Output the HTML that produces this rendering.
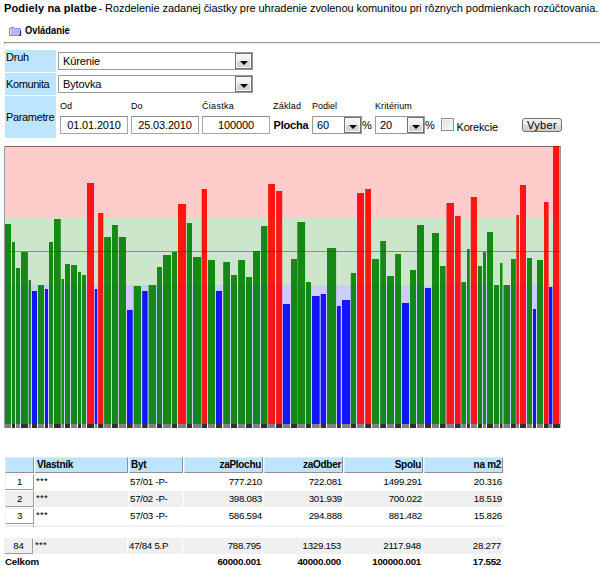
<!DOCTYPE html>
<html><head><meta charset="utf-8"><title>Podiely na platbe</title>
<style>
html,body{margin:0;padding:0;background:#fff;}
body{width:600px;height:582px;position:relative;overflow:hidden;font-family:"Liberation Sans",sans-serif;font-size:11px;color:#000;}
.a{position:absolute;white-space:nowrap;line-height:1;}
.chart{position:absolute;left:4px;top:146px;}
.lab{position:absolute;left:5px;width:51px;background:#bde5ff;}
.sel{position:absolute;box-sizing:border-box;border:1px solid #9a9a9a;background:#fff;height:18px;}
.sel .btn{position:absolute;right:0;top:0;bottom:0;width:17px;box-sizing:border-box;border:1px solid #707070;background:linear-gradient(#f6f6f6 0%,#eeeeee 50%,#d8d8d8 51%,#d0d0d0 100%);box-shadow:inset 0 0 0 1px #fafafa;}
.sel .btn:after{content:"";position:absolute;left:3.5px;top:7px;border-left:4px solid transparent;border-right:4px solid transparent;border-top:4px solid #000;}
.sel span{position:absolute;left:4px;top:2px;line-height:12px;letter-spacing:-0.12px;}
.inp{position:absolute;box-sizing:border-box;border:1px solid #a6a6a6;border-top-color:#8a8a8a;background:#fff;height:18px;width:68px;text-align:center;line-height:16px;letter-spacing:-0.15px;}
.sm{font-size:9px;}
.th,.td,.tn,.tf{position:absolute;box-sizing:border-box;height:16px;line-height:15px;font-size:9.7px;letter-spacing:-0.25px;white-space:nowrap;overflow:hidden;}
.th{background:#bde5ff;border-right:1px solid #909090;border-bottom:1px solid #909090;border-top:1px solid #d8efff;border-left:1px solid #d8efff;font-weight:bold;font-size:10px;letter-spacing:-0.3px;padding:0 1px;line-height:13px;}
.td{padding:0 1px;}
.tn{border-right:1px solid #9a9a9a;border-bottom:1px solid #9a9a9a;border-left:1px solid #f0f0f0;border-top:1px solid #f0f0f0;text-align:center;line-height:13px;}
.tf{font-weight:bold;padding:0 1px;}
.st{letter-spacing:0.25px;position:relative;top:-1px;}
</style></head><body>
<div class="a" style="left:4px;top:2px;font-size:11px;line-height:13px;"><b style="letter-spacing:0.15px">Podiely na platbe</b><span style="letter-spacing:-0.06px;margin-left:-1.5px"> - Rozdelenie zadanej čiastky pre uhradenie zvolenou komunitou pri rôznych podmienkach rozúčtovania.</span></div>
<svg class="a" style="left:9px;top:26px" width="14" height="11" viewBox="0 0 14 11"><path d="M0.5 9.5 L0.5 2.5 L1.5 1.5 L5 1.5 L6 2.5 L11 2.5 L11.5 3.5 L11.5 9.5 Z" fill="#b6b6fa" stroke="#8c8ce8" stroke-width="1"/><path d="M1.5 3.5 L1.5 8.5" stroke="#e4e4ff" stroke-width="1"/><path d="M11.6 4.5 L11.6 9.3 L10 9.3" stroke="#26266a" stroke-width="1.1" fill="none"/></svg>
<div class="a" style="left:25px;top:25px;font-size:10px;font-weight:bold;line-height:11px;transform:scaleX(0.935);transform-origin:0 0;">Ovládanie</div>
<div class="a" style="left:4px;top:42px;width:596px;height:1px;background:#979797;"></div>
<div class="a" style="left:4px;top:43px;width:596px;height:1px;background:#eeeeee;border-left:1px solid #a0a0a0;box-sizing:border-box;"></div>

<div class="lab" style="top:50px;height:22px;"></div>
<div class="lab" style="top:73px;height:22px;"></div>
<div class="lab" style="top:96px;height:42px;"></div>
<div class="a" style="left:6px;top:51px;line-height:13px;letter-spacing:-0.2px;">Druh</div>
<div class="a" style="left:6px;top:78px;line-height:13px;letter-spacing:-0.4px;">Komunita</div>
<div class="a" style="left:6px;top:111px;line-height:13px;letter-spacing:-0.35px;">Parametre</div>

<div class="sel" style="left:58px;top:52px;width:195px;"><span>Kúrenie</span><div class="btn"></div></div>
<div class="sel" style="left:58px;top:75px;width:195px;"><span>Bytovka</span><div class="btn"></div></div>

<div class="a sm" style="left:60px;top:101px;line-height:11px;">Od</div>
<div class="a sm" style="left:131px;top:101px;line-height:11px;">Do</div>
<div class="a sm" style="left:202px;top:101px;line-height:11px;letter-spacing:0.3px;">Čiastka</div>
<div class="a sm" style="left:273px;top:101px;line-height:11px;letter-spacing:0.2px;">Základ</div>
<div class="a sm" style="left:312px;top:101px;line-height:11px;">Podiel</div>
<div class="a sm" style="left:375px;top:101px;line-height:11px;letter-spacing:0.1px;">Kritérium</div>

<div class="inp" style="left:60px;top:116px;">01.01.2010</div>
<div class="inp" style="left:131px;top:116px;">25.03.2010</div>
<div class="inp" style="left:202px;top:116px;">100000</div>
<div class="a" style="left:273.5px;top:119px;line-height:13px;font-weight:bold;letter-spacing:-0.2px;">Plocha</div>
<div class="sel" style="left:312px;top:116px;width:50px;"><span>60</span><div class="btn"></div></div>
<div class="a" style="left:362px;top:119px;line-height:13px;">%</div>
<div class="sel" style="left:375px;top:116px;width:50px;"><span>20</span><div class="btn"></div></div>
<div class="a" style="left:425px;top:119px;line-height:13px;">%</div>
<div class="a" style="left:441px;top:118px;width:13px;height:13px;box-sizing:border-box;border:1px solid #8e8f8f;background:linear-gradient(135deg,#dde2e6,#f6f6f6);box-shadow:inset 0 0 0 1px #f4f4f4;"></div>
<div class="a" style="left:456.5px;top:121px;line-height:13px;letter-spacing:-0.18px;">Korekcie</div>
<div class="a" style="left:522px;top:118px;width:40px;height:14px;box-sizing:border-box;border:1px solid #707070;border-radius:3px;background:linear-gradient(#f4f4f4 0%,#ebebeb 50%,#dcdcdc 51%,#cfcfcf 100%);text-align:center;line-height:12px;letter-spacing:0.3px;">Vyber</div>

<svg class="chart" width="557" height="282" viewBox="4 146 557 282">
<g shape-rendering="crispEdges">
<rect x="4" y="146" width="557" height="71" fill="#ffcccc"/>
<rect x="4" y="217" width="557" height="68" fill="#cce6cc"/>
<rect x="4" y="285" width="557" height="139" fill="#ccccff"/>
<rect x="4" y="146" width="557" height="1" fill="#806666"/>
</g>
<rect x="5" y="224" width="6" height="200" fill="#008000" fill-opacity=".9"/>
<rect x="4.3" y="424" width="6.7" height="4" fill="#808080"/>
<rect x="12" y="242" width="3" height="182" fill="#008000" fill-opacity=".9"/>
<rect x="12" y="424" width="3" height="4" fill="#303030"/>
<rect x="16" y="268" width="4" height="156" fill="#008000" fill-opacity=".9"/>
<rect x="16" y="424" width="4" height="4" fill="#808080"/>
<rect x="21" y="252" width="6.9" height="172" fill="#008000" fill-opacity=".9"/>
<rect x="21" y="424" width="6.9" height="4" fill="#303030"/>
<rect x="28.6" y="280" width="2.4" height="144" fill="#008000" fill-opacity=".9"/>
<rect x="28.6" y="424" width="2.4" height="4" fill="#808080"/>
<rect x="32" y="291" width="5" height="133" fill="#0000ff" fill-opacity=".9"/>
<rect x="32" y="424" width="5" height="4" fill="#303030"/>
<rect x="38" y="285" width="6" height="139" fill="#008000" fill-opacity=".9"/>
<rect x="38" y="424" width="6" height="4" fill="#808080"/>
<rect x="45" y="289" width="3" height="135" fill="#0000ff" fill-opacity=".9"/>
<rect x="45" y="424" width="3" height="4" fill="#303030"/>
<rect x="49" y="242" width="4" height="182" fill="#008000" fill-opacity=".9"/>
<rect x="49" y="424" width="4" height="4" fill="#808080"/>
<rect x="54" y="219" width="6.8" height="205" fill="#008000" fill-opacity=".9"/>
<rect x="54" y="424" width="6.8" height="4" fill="#303030"/>
<rect x="61.5" y="279" width="2.5" height="145" fill="#008000" fill-opacity=".9"/>
<rect x="61.5" y="424" width="2.5" height="4" fill="#808080"/>
<rect x="65" y="264" width="5" height="160" fill="#008000" fill-opacity=".9"/>
<rect x="65" y="424" width="5" height="4" fill="#303030"/>
<rect x="71" y="265" width="6" height="159" fill="#008000" fill-opacity=".9"/>
<rect x="71" y="424" width="6" height="4" fill="#808080"/>
<rect x="78" y="272" width="3" height="152" fill="#008000" fill-opacity=".9"/>
<rect x="78" y="424" width="3" height="4" fill="#303030"/>
<rect x="82" y="275" width="4" height="149" fill="#008000" fill-opacity=".9"/>
<rect x="82" y="424" width="4" height="4" fill="#808080"/>
<rect x="87" y="183" width="7" height="241" fill="#ff0000" fill-opacity=".9"/>
<rect x="87" y="424" width="7" height="4" fill="#303030"/>
<rect x="94.8" y="289" width="2.4" height="135" fill="#0000ff" fill-opacity=".9"/>
<rect x="94.8" y="424" width="2.4" height="4" fill="#808080"/>
<rect x="98.1" y="213" width="5.2" height="211" fill="#ff0000" fill-opacity=".9"/>
<rect x="98.1" y="424" width="5.2" height="4" fill="#303030"/>
<rect x="104.1" y="237" width="6.9" height="187" fill="#008000" fill-opacity=".9"/>
<rect x="104.1" y="424" width="6.9" height="4" fill="#808080"/>
<rect x="112" y="225" width="5.9" height="199" fill="#008000" fill-opacity=".9"/>
<rect x="112" y="424" width="5.9" height="4" fill="#303030"/>
<rect x="118.8" y="237" width="7.2" height="187" fill="#008000" fill-opacity=".9"/>
<rect x="118.8" y="424" width="7.2" height="4" fill="#808080"/>
<rect x="127" y="310" width="5.7" height="114" fill="#0000ff" fill-opacity=".9"/>
<rect x="127" y="424" width="5.7" height="4" fill="#303030"/>
<rect x="133.7" y="286" width="7.3" height="138" fill="#008000" fill-opacity=".9"/>
<rect x="133.7" y="424" width="7.3" height="4" fill="#808080"/>
<rect x="142.2" y="291" width="5.4" height="133" fill="#0000ff" fill-opacity=".9"/>
<rect x="142.2" y="424" width="5.4" height="4" fill="#303030"/>
<rect x="148.6" y="285" width="7.5" height="139" fill="#008000" fill-opacity=".9"/>
<rect x="148.6" y="424" width="7.5" height="4" fill="#808080"/>
<rect x="157" y="267" width="5" height="157" fill="#008000" fill-opacity=".9"/>
<rect x="157" y="424" width="5" height="4" fill="#303030"/>
<rect x="163" y="255" width="8.1" height="169" fill="#008000" fill-opacity=".9"/>
<rect x="163" y="424" width="8.1" height="4" fill="#808080"/>
<rect x="172" y="252" width="5" height="172" fill="#008000" fill-opacity=".9"/>
<rect x="172" y="424" width="5" height="4" fill="#303030"/>
<rect x="178" y="204" width="8.1" height="220" fill="#ff0000" fill-opacity=".9"/>
<rect x="178" y="424" width="8.1" height="4" fill="#808080"/>
<rect x="186.9" y="223" width="5.1" height="201" fill="#008000" fill-opacity=".9"/>
<rect x="186.9" y="424" width="5.1" height="4" fill="#303030"/>
<rect x="193" y="257" width="8.1" height="167" fill="#008000" fill-opacity=".9"/>
<rect x="193" y="424" width="8.1" height="4" fill="#808080"/>
<rect x="201.7" y="189" width="5.3" height="235" fill="#ff0000" fill-opacity=".9"/>
<rect x="201.7" y="424" width="5.3" height="4" fill="#303030"/>
<rect x="208" y="260" width="7" height="164" fill="#008000" fill-opacity=".9"/>
<rect x="208" y="424" width="7" height="4" fill="#808080"/>
<rect x="216" y="291" width="6" height="133" fill="#0000ff" fill-opacity=".9"/>
<rect x="216" y="424" width="6" height="4" fill="#303030"/>
<rect x="223.2" y="262" width="6.8" height="162" fill="#008000" fill-opacity=".9"/>
<rect x="223.2" y="424" width="6.8" height="4" fill="#808080"/>
<rect x="231" y="275" width="6" height="149" fill="#008000" fill-opacity=".9"/>
<rect x="231" y="424" width="6" height="4" fill="#303030"/>
<rect x="238.1" y="260" width="6.9" height="164" fill="#008000" fill-opacity=".9"/>
<rect x="238.1" y="424" width="6.9" height="4" fill="#808080"/>
<rect x="246" y="277" width="6" height="147" fill="#008000" fill-opacity=".9"/>
<rect x="246" y="424" width="6" height="4" fill="#303030"/>
<rect x="253" y="251" width="7" height="173" fill="#008000" fill-opacity=".9"/>
<rect x="253" y="424" width="7" height="4" fill="#808080"/>
<rect x="261" y="226" width="6.4" height="198" fill="#008000" fill-opacity=".9"/>
<rect x="261" y="424" width="6.4" height="4" fill="#303030"/>
<rect x="268.1" y="184" width="6.9" height="240" fill="#ff0000" fill-opacity=".9"/>
<rect x="268.1" y="424" width="6.9" height="4" fill="#808080"/>
<rect x="276.1" y="191" width="6.1" height="233" fill="#ff0000" fill-opacity=".9"/>
<rect x="276.1" y="424" width="6.1" height="4" fill="#303030"/>
<rect x="282.9" y="304" width="7.1" height="120" fill="#0000ff" fill-opacity=".9"/>
<rect x="282.9" y="424" width="7.1" height="4" fill="#808080"/>
<rect x="291" y="259" width="6" height="165" fill="#008000" fill-opacity=".9"/>
<rect x="291" y="424" width="6" height="4" fill="#303030"/>
<rect x="297.3" y="222" width="7.8" height="202" fill="#008000" fill-opacity=".9"/>
<rect x="297.3" y="424" width="7.8" height="4" fill="#808080"/>
<rect x="306" y="282" width="5" height="142" fill="#008000" fill-opacity=".9"/>
<rect x="306" y="424" width="5" height="4" fill="#303030"/>
<rect x="312" y="296" width="7.7" height="128" fill="#0000ff" fill-opacity=".9"/>
<rect x="312" y="424" width="7.7" height="4" fill="#808080"/>
<rect x="320.7" y="294" width="5.3" height="130" fill="#0000ff" fill-opacity=".9"/>
<rect x="320.7" y="424" width="5.3" height="4" fill="#303030"/>
<rect x="327" y="248" width="9.1" height="176" fill="#008000" fill-opacity=".9"/>
<rect x="327" y="424" width="9.1" height="4" fill="#808080"/>
<rect x="337" y="306" width="3.8" height="118" fill="#0000ff" fill-opacity=".9"/>
<rect x="337" y="424" width="3.8" height="4" fill="#303030"/>
<rect x="342" y="300" width="8.1" height="124" fill="#0000ff" fill-opacity=".9"/>
<rect x="342" y="424" width="8.1" height="4" fill="#808080"/>
<rect x="350.8" y="273" width="5.2" height="151" fill="#008000" fill-opacity=".9"/>
<rect x="350.8" y="424" width="5.2" height="4" fill="#303030"/>
<rect x="357" y="193" width="7" height="231" fill="#ff0000" fill-opacity=".9"/>
<rect x="357" y="424" width="7" height="4" fill="#808080"/>
<rect x="365.2" y="189" width="5.8" height="235" fill="#ff0000" fill-opacity=".9"/>
<rect x="365.2" y="424" width="5.8" height="4" fill="#303030"/>
<rect x="372" y="259" width="7" height="165" fill="#008000" fill-opacity=".9"/>
<rect x="372" y="424" width="7" height="4" fill="#808080"/>
<rect x="380.2" y="241" width="5.8" height="183" fill="#008000" fill-opacity=".9"/>
<rect x="380.2" y="424" width="5.8" height="4" fill="#303030"/>
<rect x="387" y="276" width="7" height="148" fill="#008000" fill-opacity=".9"/>
<rect x="387" y="424" width="7" height="4" fill="#808080"/>
<rect x="395.1" y="254" width="5.9" height="170" fill="#008000" fill-opacity=".9"/>
<rect x="395.1" y="424" width="5.9" height="4" fill="#303030"/>
<rect x="402" y="303" width="7" height="121" fill="#0000ff" fill-opacity=".9"/>
<rect x="402" y="424" width="7" height="4" fill="#808080"/>
<rect x="410" y="270" width="6" height="154" fill="#008000" fill-opacity=".9"/>
<rect x="410" y="424" width="6" height="4" fill="#303030"/>
<rect x="417" y="225" width="7" height="199" fill="#008000" fill-opacity=".9"/>
<rect x="417" y="424" width="7" height="4" fill="#808080"/>
<rect x="425" y="288" width="6" height="136" fill="#0000ff" fill-opacity=".9"/>
<rect x="425" y="424" width="6" height="4" fill="#303030"/>
<rect x="432" y="233" width="7" height="191" fill="#008000" fill-opacity=".9"/>
<rect x="432" y="424" width="7" height="4" fill="#808080"/>
<rect x="440" y="266" width="5.6" height="158" fill="#008000" fill-opacity=".9"/>
<rect x="440" y="424" width="5.6" height="4" fill="#303030"/>
<rect x="446.5" y="203" width="7.5" height="221" fill="#ff0000" fill-opacity=".9"/>
<rect x="446.5" y="424" width="7.5" height="4" fill="#808080"/>
<rect x="455" y="216" width="5.7" height="208" fill="#ff0000" fill-opacity=".9"/>
<rect x="455" y="424" width="5.7" height="4" fill="#303030"/>
<rect x="461.3" y="282" width="4.7" height="142" fill="#008000" fill-opacity=".9"/>
<rect x="461.3" y="424" width="4.7" height="4" fill="#808080"/>
<rect x="467" y="249" width="2.8" height="175" fill="#008000" fill-opacity=".9"/>
<rect x="467" y="424" width="2.8" height="4" fill="#303030"/>
<rect x="470.8" y="197" width="6.2" height="227" fill="#ff0000" fill-opacity=".9"/>
<rect x="470.8" y="424" width="6.2" height="4" fill="#808080"/>
<rect x="478" y="266" width="4" height="158" fill="#008000" fill-opacity=".9"/>
<rect x="478" y="424" width="4" height="4" fill="#303030"/>
<rect x="483" y="252" width="3" height="172" fill="#008000" fill-opacity=".9"/>
<rect x="483" y="424" width="3" height="4" fill="#808080"/>
<rect x="487" y="232" width="6" height="192" fill="#008000" fill-opacity=".9"/>
<rect x="487" y="424" width="6" height="4" fill="#303030"/>
<rect x="494" y="285" width="5" height="139" fill="#008000" fill-opacity=".9"/>
<rect x="494" y="424" width="5" height="4" fill="#808080"/>
<rect x="500" y="263" width="2.5" height="161" fill="#008000" fill-opacity=".9"/>
<rect x="500" y="424" width="2.5" height="4" fill="#303030"/>
<rect x="503.5" y="285" width="6.5" height="139" fill="#008000" fill-opacity=".9"/>
<rect x="503.5" y="424" width="6.5" height="4" fill="#808080"/>
<rect x="511" y="259" width="4.8" height="165" fill="#008000" fill-opacity=".9"/>
<rect x="511" y="424" width="4.8" height="4" fill="#303030"/>
<rect x="516.3" y="215" width="2.7" height="209" fill="#ff0000" fill-opacity=".9"/>
<rect x="516.3" y="424" width="2.7" height="4" fill="#808080"/>
<rect x="520" y="185" width="6" height="239" fill="#ff0000" fill-opacity=".9"/>
<rect x="520" y="424" width="6" height="4" fill="#303030"/>
<rect x="527" y="258" width="5" height="166" fill="#008000" fill-opacity=".9"/>
<rect x="527" y="424" width="5" height="4" fill="#808080"/>
<rect x="533" y="309" width="3" height="115" fill="#0000ff" fill-opacity=".9"/>
<rect x="533" y="424" width="3" height="4" fill="#303030"/>
<rect x="537" y="260" width="6" height="164" fill="#008000" fill-opacity=".9"/>
<rect x="537" y="424" width="6" height="4" fill="#808080"/>
<rect x="544" y="202" width="4.6" height="222" fill="#ff0000" fill-opacity=".9"/>
<rect x="544" y="424" width="4.6" height="4" fill="#303030"/>
<rect x="549" y="287" width="3.3" height="137" fill="#0000ff" fill-opacity=".9"/>
<rect x="549" y="424" width="3.3" height="4" fill="#808080"/>
<rect x="553" y="146" width="6.4" height="278" fill="#ff0000" fill-opacity=".9"/>
<rect x="553" y="424" width="7.3" height="4" fill="#303030"/>
<g shape-rendering="crispEdges">
<rect x="4" y="251" width="557" height="1" fill="rgba(0,100,0,0.5)"/>
<rect x="4" y="146" width="1" height="278" fill="#989898"/>
<rect x="560" y="146" width="1" height="278" fill="#989898"/>
</g>
</svg>

<div class="th" style="left:5px;top:457px;width:29px;text-align:left;"></div>
<div class="th" style="left:35px;top:457px;width:93px;text-align:left;">Vlastník</div>
<div class="th" style="left:129px;top:457px;width:54px;text-align:left;">Byt</div>
<div class="th" style="left:184px;top:457px;width:79px;text-align:right;">zaPlochu</div>
<div class="th" style="left:264px;top:457px;width:79px;text-align:right;">zaOdber</div>
<div class="th" style="left:344px;top:457px;width:79px;text-align:right;">Spolu</div>
<div class="th" style="left:424px;top:457px;width:79px;text-align:right;">na m2</div>
<div class="tn" style="left:5px;top:474px;width:29px;background:#fff;">1</div>
<div class="td" style="left:35px;top:474px;width:93px;background:#fff;text-align:left;"><span class="st">***</span></div>
<div class="td" style="left:129px;top:474px;width:54px;background:#fff;text-align:left;">57/01 -P-</div>
<div class="td" style="left:184px;top:474px;width:79px;background:#fff;text-align:right;">777.210</div>
<div class="td" style="left:264px;top:474px;width:79px;background:#fff;text-align:right;">722.081</div>
<div class="td" style="left:344px;top:474px;width:79px;background:#fff;text-align:right;">1499.291</div>
<div class="td" style="left:424px;top:474px;width:79px;background:#fff;text-align:right;">20.316</div>
<div class="tn" style="left:5px;top:491px;width:29px;background:#f0f0f0;">2</div>
<div class="td" style="left:35px;top:491px;width:93px;background:#f0f0f0;text-align:left;"><span class="st">***</span></div>
<div class="td" style="left:129px;top:491px;width:54px;background:#f0f0f0;text-align:left;">57/02 -P-</div>
<div class="td" style="left:184px;top:491px;width:79px;background:#f0f0f0;text-align:right;">398.083</div>
<div class="td" style="left:264px;top:491px;width:79px;background:#f0f0f0;text-align:right;">301.939</div>
<div class="td" style="left:344px;top:491px;width:79px;background:#f0f0f0;text-align:right;">700.022</div>
<div class="td" style="left:424px;top:491px;width:79px;background:#f0f0f0;text-align:right;">18.519</div>
<div class="tn" style="left:5px;top:508px;width:29px;background:#fff;">3</div>
<div class="td" style="left:35px;top:508px;width:93px;background:#fff;text-align:left;"><span class="st">***</span></div>
<div class="td" style="left:129px;top:508px;width:54px;background:#fff;text-align:left;">57/03 -P-</div>
<div class="td" style="left:184px;top:508px;width:79px;background:#fff;text-align:right;">586.594</div>
<div class="td" style="left:264px;top:508px;width:79px;background:#fff;text-align:right;">294.888</div>
<div class="td" style="left:344px;top:508px;width:79px;background:#fff;text-align:right;">881.482</div>
<div class="td" style="left:424px;top:508px;width:79px;background:#fff;text-align:right;">15.826</div>
<div class="tn" style="left:4px;top:538px;width:29px;background:#f0f0f0;">84</div>
<div class="td" style="left:34px;top:538px;width:93px;background:#f0f0f0;text-align:left;"><span class="st">***</span></div>
<div class="td" style="left:128px;top:538px;width:54px;background:#f0f0f0;text-align:left;">47/84 5.P</div>
<div class="td" style="left:183px;top:538px;width:79px;background:#f0f0f0;text-align:right;">788.795</div>
<div class="td" style="left:263px;top:538px;width:79px;background:#f0f0f0;text-align:right;">1329.153</div>
<div class="td" style="left:343px;top:538px;width:79px;background:#f0f0f0;text-align:right;">2117.948</div>
<div class="td" style="left:423px;top:538px;width:79px;background:#f0f0f0;text-align:right;">28.277</div>
<div class="a" style="left:5px;top:525px;width:29px;height:2px;background:#f0f0f0;"></div>
<div class="a" style="left:35px;top:525px;width:93px;height:2px;background:#f0f0f0;"></div>
<div class="a" style="left:129px;top:525px;width:54px;height:2px;background:#f0f0f0;"></div>
<div class="a" style="left:184px;top:525px;width:79px;height:2px;background:#f0f0f0;"></div>
<div class="a" style="left:264px;top:525px;width:79px;height:2px;background:#f0f0f0;"></div>
<div class="a" style="left:344px;top:525px;width:79px;height:2px;background:#f0f0f0;"></div>
<div class="a" style="left:424px;top:525px;width:79px;height:2px;background:#f0f0f0;"></div>
<div class="a" style="left:33px;top:525px;width:1px;height:2px;background:#9a9a9a;"></div>
<div class="tf" style="left:4px;top:554px;width:80px;text-align:left;font-size:9.7px;letter-spacing:-0.2px;line-height:16px;">Celkom</div>
<div class="tf" style="left:183px;top:554px;width:79px;text-align:right;">60000.001</div>
<div class="tf" style="left:263px;top:554px;width:79px;text-align:right;">40000.000</div>
<div class="tf" style="left:343px;top:554px;width:79px;text-align:right;">100000.001</div>
<div class="tf" style="left:423px;top:554px;width:79px;text-align:right;">17.552</div>
</body></html>
